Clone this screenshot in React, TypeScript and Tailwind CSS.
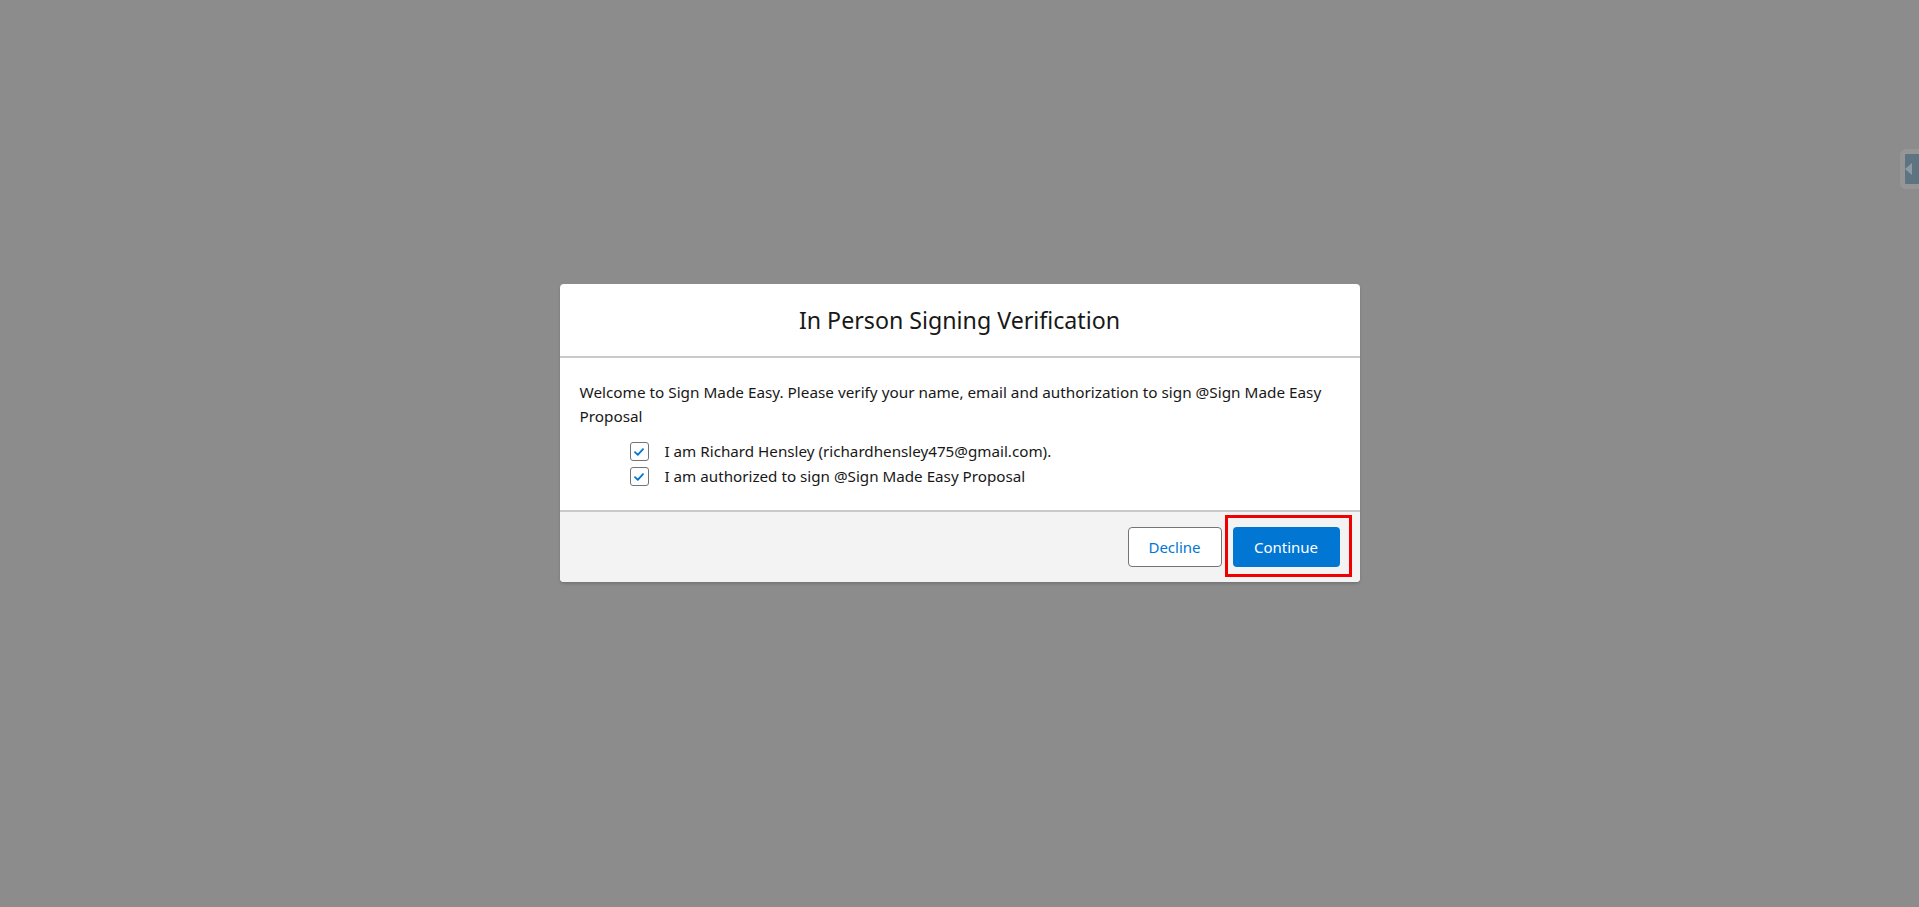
import React, { useState } from 'react';

const Check = ({ checked, onToggle }: { checked: boolean; onToggle: () => void }) => (
    <button
        onClick={onToggle}
        className="w-[19px] h-[19px] shrink-0 rounded-[3px] border border-[#747474] bg-white flex items-center justify-center"
    >
        {checked && (
            <svg width="10" height="8" viewBox="0 0 10 8">
                <path d="M1 4.2 L3.8 6.8 L9 1.2" fill="none" stroke="#0176d3" strokeWidth="1.8" strokeLinecap="round" strokeLinejoin="round" />
            </svg>
        )}
    </button>
);

export default function App() {
    const [nameOk, setNameOk] = useState(true);
    const [authOk, setAuthOk] = useState(true);

    return (
        <div className="relative min-h-screen w-full bg-[#8c8c8c] flex justify-center pt-[284px] font-['Noto_Sans',sans-serif] text-[#181818]">
            {/* side tab behind the overlay */}
            <div className="absolute right-0 top-[149px] w-[19px] h-[40px] rounded-l-[6px] border-[5px] border-r-0 border-[#969696] bg-[#5e7480] flex items-center justify-start">
                <div className="w-0 h-0 border-y-[6px] border-y-transparent border-r-[7px] border-r-[#8d9ca3]" />
            </div>

            <div className="w-[800px] h-fit bg-white rounded-[4px] shadow-[0_2px_3px_rgba(0,0,0,0.16)]">
                <div className="h-[74px] pt-[2px] flex items-center justify-center border-b-2 border-[#c9c9c9]">
                    <h2 className="text-[23.2px] leading-none">In Person Signing Verification</h2>
                </div>

                <div className="px-5 pt-[22px] pb-[21px]">
                    <p className="text-[15.3px] leading-[24px]">
                        Welcome to Sign Made Easy. Please verify your name, email and authorization to sign @Sign Made Easy Proposal
                    </p>
                    <div className="mt-[11px] pl-[50px] flex flex-col">
                        <label className="h-[25px] flex items-center gap-4 text-[15.2px]">
                            <Check checked={nameOk} onToggle={() => setNameOk(!nameOk)} />
                            <span>I am Richard Hensley (richardhensley475@gmail.com).</span>
                        </label>
                        <label className="h-[25px] flex items-center gap-4 text-[15.2px]">
                            <Check checked={authOk} onToggle={() => setAuthOk(!authOk)} />
                            <span>I am authorized to sign @Sign Made Easy Proposal</span>
                        </label>
                    </div>
                </div>

                <div className="h-[72px] bg-[#f3f3f3] border-t-2 border-[#c9c9c9] rounded-b-[4px] flex items-center justify-end gap-[11px] pr-5">
                    <button className="w-[94px] h-[40px] rounded-[4px] border border-[#747474] bg-white text-[#0176d3] text-[15px]">
                        Decline
                    </button>
                    <div className="relative">
                        <button className="w-[107px] h-[40px] rounded-[4px] bg-[#0176d3] text-white text-[15px]">
                            Continue
                        </button>
                        <div className="absolute -left-[8px] -right-[12px] -top-[12px] -bottom-[10px] border-[3px] border-[#f00000] pointer-events-none" />
                    </div>
                </div>
            </div>
        </div>
    );
}
